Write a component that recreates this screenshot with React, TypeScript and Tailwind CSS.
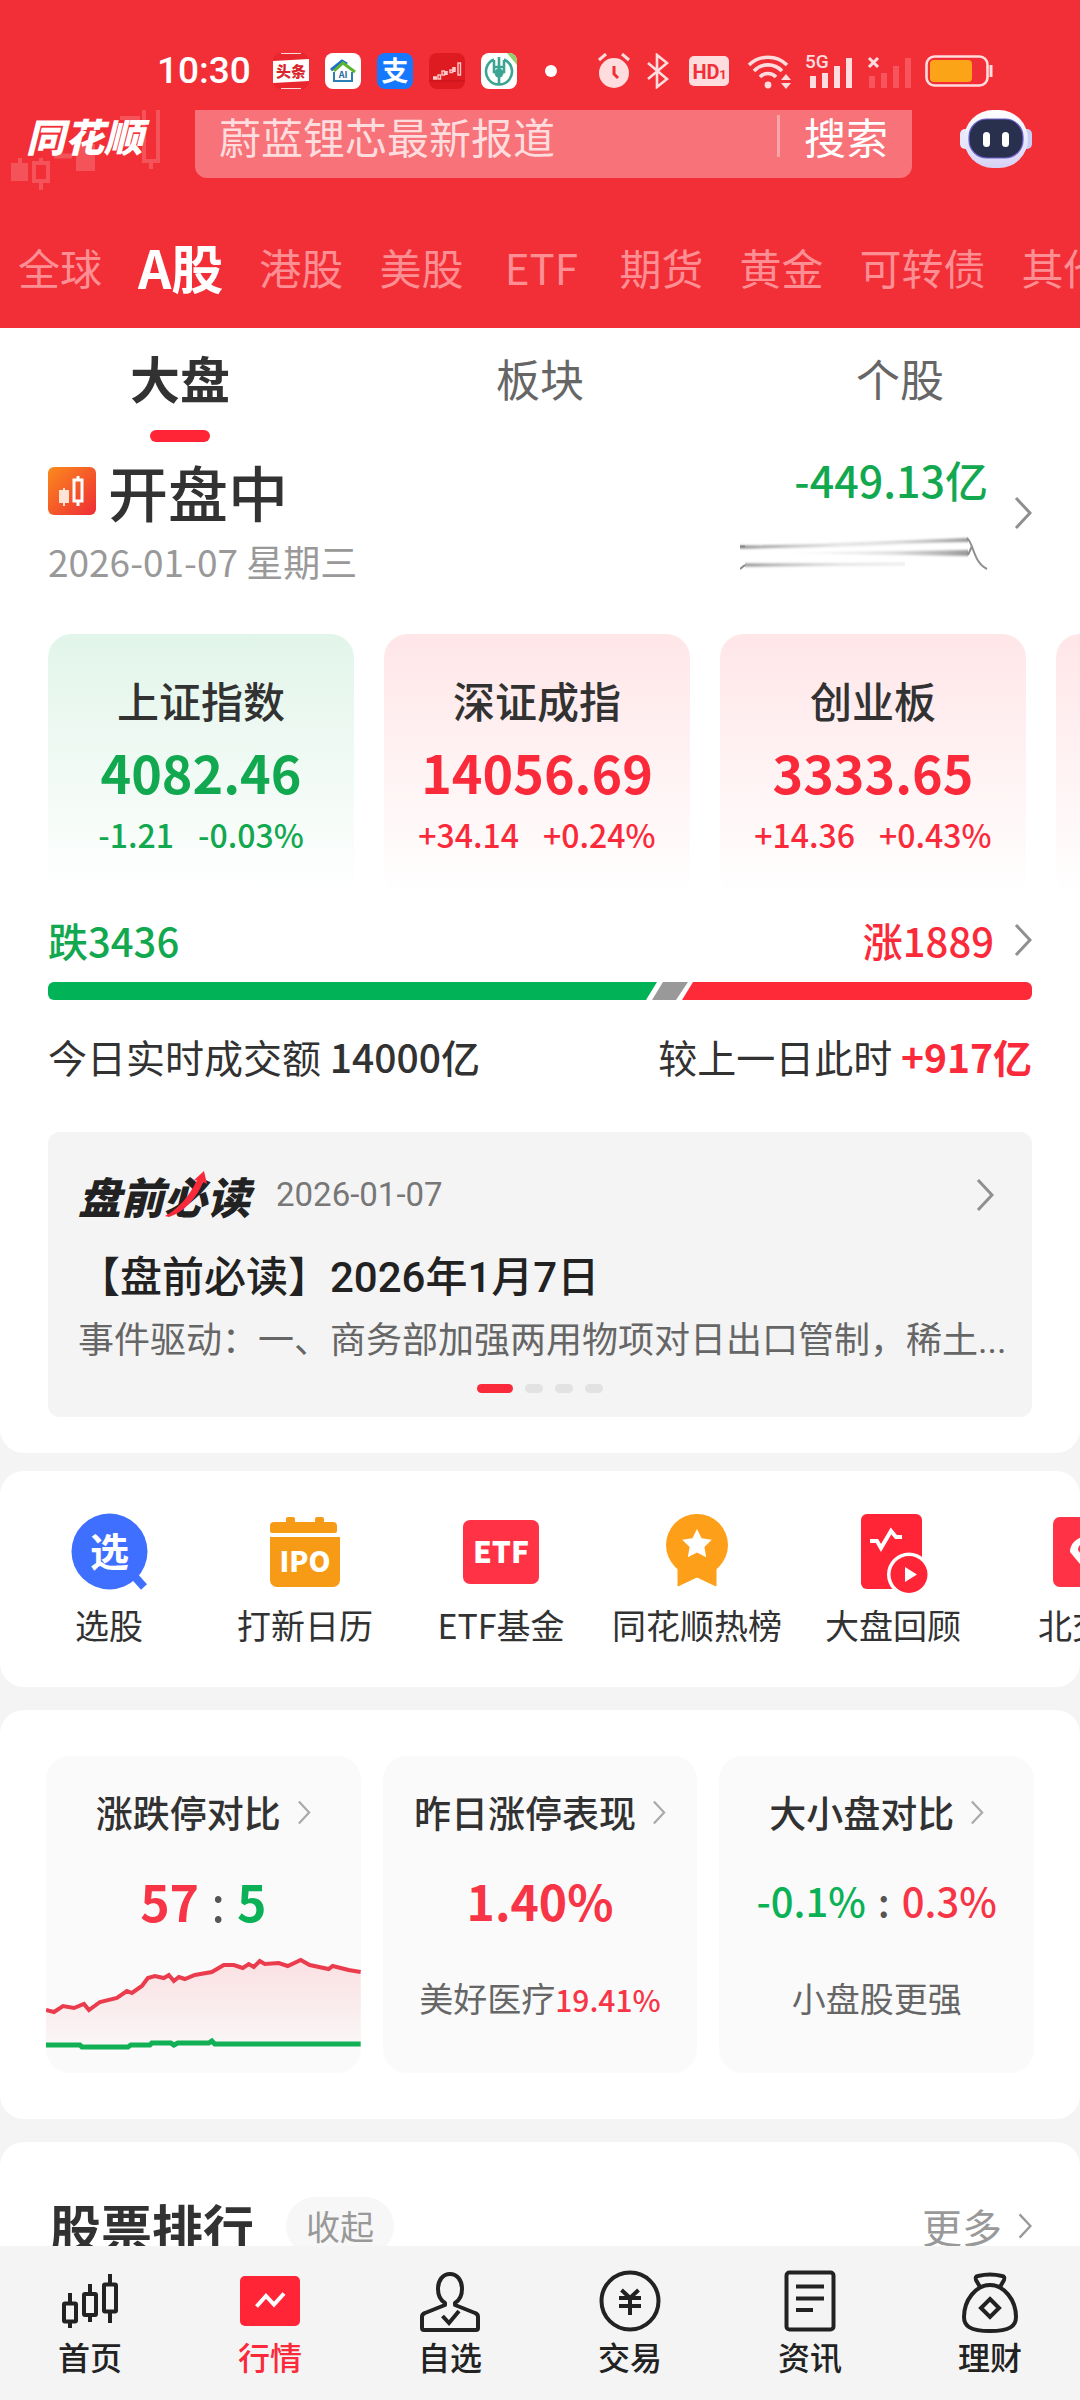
import type { ReactNode } from 'react';

const markets = ['全球', 'A股', '港股', '美股', 'ETF', '期货', '黄金', '可转债', '其他'];

const indices = [
  { name: '上证指数', value: '4082.46', diff: '-1.21', pct: '-0.03%', up: false },
  { name: '深证成指', value: '14056.69', diff: '+34.14', pct: '+0.24%', up: true },
  { name: '创业板', value: '3333.65', diff: '+14.36', pct: '+0.43%', up: true },
];

function Chevron({ className }: { className: string }) {
  return (
    <svg viewBox="0 0 18 34" fill="none" stroke="currentColor" strokeWidth="3" className={className} aria-hidden="true">
      <path d="M2 2l14 15L2 32" />
    </svg>
  );
}

function StatusBar() {
  return (
    <div className="flex h-[110px] items-center pt-8 pl-[157px] text-white">
      <span className="w-[116px] font-['Roboto'] text-[37px] leading-[44px] font-medium">10:30</span>
      <div className="flex items-center gap-4">
        <svg viewBox="0 0 36 36" className="size-9 overflow-visible">
          <rect width="36" height="36" rx="8" fill="#e8262d" />
          <path d="M8 .5h20M8 35.5h20" stroke="#ffd9d9" />
          <path d="M0 8l36-2v22L0 30z" fill="#fff" />
          <text x="18" y="24" textAnchor="middle" fontSize="15" fontWeight="900" fill="#d9252b">头条</text>
        </svg>
        <svg viewBox="0 0 36 36" className="size-9 overflow-visible">
          <rect width="36" height="36" rx="8" fill="#fff" />
          <path d="M9 19v9h18v-9" fill="none" stroke="#2b7fb5" strokeWidth="2" />
          <path d="M6 17L17 8l5 3" fill="none" stroke="#1f6fc4" strokeWidth="3" />
          <path d="M9 18l9-8 12 9" fill="none" stroke="#5cb531" strokeWidth="3" />
          <text x="18" y="25" textAnchor="middle" fontSize="9" fontWeight="700" fill="#246a9c">AI</text>
        </svg>
        <svg viewBox="0 0 36 36" className="size-9 overflow-visible">
          <rect width="36" height="36" rx="8" fill="#1677ff" />
          <text x="18" y="28" textAnchor="middle" fontSize="27" fontWeight="700" fill="#fff">支</text>
        </svg>
        <svg viewBox="0 0 36 36" className="size-9">
          <rect width="36" height="36" rx="8" fill="#df1b22" />
          <path d="M0 28h36" stroke="#c41219" />
          <g fill="none" stroke="#ffc9c9" strokeWidth="1.4">
            <path d="M4 25h4M17 22v-4M25 19v-5" strokeWidth="3.5" />
            <rect x="9" y="22" width="2.5" height="4" />
            <rect x="13" y="18" width="2.5" height="4" />
            <rect x="21" y="17" width="2.5" height="2.5" />
            <rect x="29" y="10" width="2.5" height="12" />
          </g>
        </svg>
        <svg viewBox="0 0 36 36" className="size-9">
          <rect width="36" height="36" rx="8" fill="#fff" />
          <path d="M26 0h2a8 8 0 018 8v4z" fill="#8fd06b" />
          <g fill="none" stroke="#3ba493" strokeWidth="2.6">
            <path d="M13 6.5a13 13 0 1010 0M18 4v28M13 7v12h10V7M13 14h10" />
          </g>
          <circle cx="18" cy="20" r="4.5" fill="#3ba493" />
        </svg>
      </div>
      <svg viewBox="0 0 12 12" className="ml-7 size-3"><circle cx="6" cy="6" r="6" fill="#fff" /></svg>
      <div className="ml-10 flex items-center text-[#ffdcdd]">
        <svg viewBox="0 0 34 36" className="h-9 w-[34px]">
          <circle cx="17" cy="20" r="15" fill="currentColor" />
          <path d="M2 7l7-6M25 1l7 6" stroke="currentColor" strokeWidth="3" />
          <path d="M17 13v8l4 4" fill="none" stroke="#f22f37" strokeWidth="3" />
        </svg>
        <svg viewBox="0 0 22 36" className="ml-4 h-9 w-[22px]" fill="none" stroke="currentColor" strokeWidth="2.6">
          <path d="M1 10l19 16-10 8V2l10 8L1 26" />
        </svg>
        <svg viewBox="0 0 40 30" className="ml-5 h-[30px] w-10 overflow-visible">
          <rect width="40" height="30" rx="5" fill="currentColor" />
          <text x="17" y="23" textAnchor="middle" fontFamily="Roboto" fontSize="20" fontWeight="700" fill="#f22f37">HD</text>
          <text x="34" y="23" textAnchor="middle" fontFamily="Roboto" fontSize="13" fontWeight="700" fill="#f22f37">1</text>
        </svg>
        <svg viewBox="0 0 46 36" className="ml-[18px] h-9 w-[46px]">
          <g fill="none" stroke="currentColor" strokeWidth="3.6">
            <path d="M2 12a27 27 0 0138 0M7 18a19 19 0 0128 0M13 24a11 11 0 0116 0" />
          </g>
          <circle cx="21" cy="32" r="3.4" fill="currentColor" />
          <path d="M34 27l5-6 5 6zM34 30l5 6 5-6z" fill="currentColor" />
        </svg>
        <svg viewBox="0 0 48 36" className="ml-3 h-9 w-12 overflow-visible">
          <text x="0" y="15" fontFamily="Roboto" fontSize="19" fontWeight="500" fill="currentColor">5G</text>
          <path d="M8 35V23M20 35V20M32 35V13M44 35V5" stroke="currentColor" strokeWidth="6" />
        </svg>
        <svg viewBox="0 0 44 36" className="ml-[14px] h-9 w-11">
          <path d="M2 5l9 9M11 5l-9 9" stroke="currentColor" strokeWidth="3" />
          <path d="M5 35V23M17 35V20M29 35V13M41 35V5" stroke="#f8545b" strokeWidth="6" />
        </svg>
        <svg viewBox="0 0 68 34" className="ml-[14px] h-[34px] w-[68px]">
          <rect x="1.5" y="2.5" width="61" height="29" rx="8" fill="none" stroke="currentColor" strokeWidth="2.6" />
          <rect x="5" y="6" width="42" height="22" rx="4" fill="#fba418" />
          <path d="M66 11v12" stroke="currentColor" strokeWidth="3" />
        </svg>
      </div>
    </div>
  );
}

function Robot() {
  return (
    <svg viewBox="0 0 72 58" className="h-[58px] w-[72px]">
      <defs>
        <linearGradient id="shell" x1="0" y1="0" x2="0" y2="1">
          <stop offset="0" stopColor="#fff" />
          <stop offset=".6" stopColor="#e3e4fb" />
          <stop offset="1" stopColor="#d8d2f6" />
        </linearGradient>
      </defs>
      <rect y="19" width="12" height="20" rx="5" fill="#e6e7fa" />
      <rect x="60" y="19" width="12" height="20" rx="5" fill="#c9cdf6" />
      <rect x="4" width="64" height="58" rx="29" fill="url(#shell)" />
      <rect x="9" y="9" width="54" height="39" rx="18" fill="#28304d" stroke="#6a5cc8" strokeWidth="1.2" />
      <rect x="23" y="22" width="7" height="15" rx="3.5" fill="#fff" />
      <rect x="42" y="22" width="7" height="15" rx="3.5" fill="#fff" />
    </svg>
  );
}

function Header() {
  return (
    <header className="bg-[#f22f37]">
      <StatusBar />
      <div className="flex h-[68px] items-stretch pr-12">
        <div className="relative w-[195px] shrink-0 pl-[26px]">
          <svg viewBox="0 0 160 84" className="absolute top-0 left-0 h-[84px] w-40" fill="none" stroke="#f5535a">
            <path d="M20 48v8" strokeWidth="4" />
            <rect x="11" y="53" width="17" height="18" fill="#f5535a" stroke="none" />
            <rect x="34" y="53" width="14" height="18" strokeWidth="4" />
            <path d="M41 48v5M41 71v9" strokeWidth="4" />
            <path d="M54 46h18" strokeWidth="5" />
            <rect x="76" y="34" width="19" height="27" fill="#f5535a" stroke="none" />
            <path d="M144 0v51h14V0M151 51v8M120 8h20" strokeWidth="4" />
          </svg>
          <h1 className="relative text-[39px] leading-[50px] font-black text-white italic">同花顺</h1>
        </div>
        <form className="flex min-w-0 flex-1 items-center rounded-b-xl bg-[#f77379] pr-6 pb-4 pl-6">
          <input
            aria-label="搜索"
            placeholder="蔚蓝锂芯最新报道"
            className="min-w-0 flex-1 bg-transparent text-[42px] leading-[52px] text-white outline-none placeholder:text-[#ffdcdd]"
          />
          <span className="h-[42px] w-[3px] bg-[#fba5a9]" />
          <button type="button" className="ml-6 text-[42px] leading-[52px] text-white">搜索</button>
        </form>
        <button type="button" aria-label="智能助手" className="ml-12 shrink-0 self-start">
          <Robot />
        </button>
      </div>
      <nav className="flex h-[150px] items-center gap-9 overflow-hidden pt-7 pl-[18px] whitespace-nowrap">
        {markets.map((m) =>
          m === 'A股' ? (
            <a key={m} href="#" className="shrink-0 text-[52px] leading-[60px] font-bold text-white">{m}</a>
          ) : (
            <a key={m} href="#" className="min-w-[84px] shrink-0 text-center text-[42px] leading-[60px] text-[#fd8f94]">{m}</a>
          )
        )}
      </nav>
    </header>
  );
}

function SubTabs() {
  return (
    <div className="grid grid-cols-3">
      <button type="button" className="flex flex-col items-center text-[50px] font-bold text-[#323232]">
        <span className="leading-[98px]">大盘</span>
        <span className="mt-1 h-3 w-[60px] rounded-full bg-[#ff2436]" />
      </button>
      <button type="button" className="self-start text-[44px] leading-[100px] text-[#666]">板块</button>
      <button type="button" className="self-start text-[44px] leading-[100px] text-[#666]">个股</button>
    </div>
  );
}

function FlowLine() {
  return (
    <svg viewBox="0 0 248 40" className="mt-7 h-10 w-[248px]" fill="none">
      <defs>
        <linearGradient id="fadeOut" gradientUnits="userSpaceOnUse" x1="0" y1="0" x2="228" y2="0">
          <stop offset="0" stopColor="#888" />
          <stop offset=".12" stopColor="#aaa" />
          <stop offset=".45" stopColor="#ccc" stopOpacity=".5" />
          <stop offset="1" stopColor="#ccc" stopOpacity=".2" />
        </linearGradient>
        <linearGradient id="fadeIn" gradientUnits="userSpaceOnUse" x1="40" y1="0" x2="228" y2="0">
          <stop offset="0" stopColor="#bbb" stopOpacity="0" />
          <stop offset=".6" stopColor="#bbb" stopOpacity=".5" />
          <stop offset="1" stopColor="#999" />
        </linearGradient>
        <filter id="smear" x="-5%" y="-100%" width="110%" height="300%">
          <feGaussianBlur stdDeviation="0 1.2" />
        </filter>
      </defs>
      <g filter="url(#smear)">
        <path d="M0 15q110-1 228-7" stroke="url(#fadeOut)" strokeWidth="3" />
        <path d="M5 33l160-1" stroke="url(#fadeOut)" strokeWidth="3" />
        <path d="M40 13L228 6v4z" fill="url(#fadeIn)" />
        <path d="M40 21l188-3v6z" fill="url(#fadeIn)" />
      </g>
      <path d="M0 14.500h5M0 37l5-4" stroke="#888" strokeWidth="2" />
      <path d="M227 6c7 6 6 24 20 31M232 14l-4 9" stroke="#8f8f8f" strokeWidth="2" />
    </svg>
  );
}

function Opening() {
  return (
    <div className="flex items-start justify-between px-12 pt-3">
      <div>
        <div className="flex items-center gap-3">
          <svg viewBox="0 0 48 48" className="size-12">
            <defs>
              <linearGradient id="openIcon" x1="0" y1="0" x2="1" y2="1">
                <stop offset="0" stopColor="#fb8a1c" />
                <stop offset="1" stopColor="#ee2c35" />
              </linearGradient>
            </defs>
            <rect width="48" height="48" rx="6" fill="url(#openIcon)" />
            <path d="M12 24h8v11h-8zM16 21v18" fill="#ffe3d4" stroke="#ffe3d4" strokeWidth="2" />
            <path d="M26 13h8v21h-8zM30 9v4M30 34v5" fill="none" stroke="#fff" strokeWidth="3" />
          </svg>
          <h2 className="text-[60px] leading-[74px] font-medium text-[#323232]">开盘中</h2>
        </div>
        <p className="mt-2.5 text-[37px] leading-[46px] text-[#999]">2026-01-07 星期三</p>
      </div>
      <div className="flex items-center gap-[26px]">
        <div className="flex flex-col items-end">
          <span className="text-[43px] leading-[50px] font-medium text-[#12a850]">-449.13亿</span>
          <FlowLine />
        </div>
        <Chevron className="h-[34px] w-[18px] text-[#8f8f8f]" />
      </div>
    </div>
  );
}

function IndexCards() {
  return (
    <div className="mt-[50px] flex gap-[30px] overflow-hidden pl-12">
      {indices.map((i) => (
        <article
          key={i.name}
          className={`flex w-[306px] shrink-0 flex-col items-center rounded-3xl bg-linear-to-b pt-[42px] pb-11 ${
            i.up ? 'from-[#ffe6e8] to-white text-[#fb2a3b]' : 'from-[#e2f5ea] to-white text-[#12a850]'
          }`}
        >
          <h3 className="text-[42px] leading-[48px] font-medium text-[#323232]">{i.name}</h3>
          <p className="mt-4 text-[52px] leading-[64px] font-bold">{i.value}</p>
          <p className="mt-2.5 flex gap-6 text-[32px] leading-[40px] font-medium">
            <span>{i.diff}</span>
            <span>{i.pct}</span>
          </p>
        </article>
      ))}
      <div className="w-[306px] shrink-0 rounded-3xl bg-linear-to-b from-[#ffe6e8] to-white" />
    </div>
  );
}

function Breadth() {
  return (
    <div className="px-12 pt-[18px]">
      <div className="flex items-center text-[40px] leading-[48px] font-medium">
        <span className="text-[#12a850]">跌3436</span>
        <span className="ml-auto text-[#fb2a3b]">涨1889</span>
        <Chevron className="ml-5 h-[34px] w-[18px] text-[#8f8f8f]" />
      </div>
      <svg viewBox="0 0 984 18" preserveAspectRatio="none" className="mt-[18px] h-[18px] w-full">
        <path d="M6 0h603l-11 18H6a6 6 0 01-6-6V6a6 6 0 016-6z" fill="#02b257" />
        <path d="M615 0h25l-12 18h-24z" fill="#999" />
        <path d="M645 0h333a6 6 0 016 6v6a6 6 0 01-6 6H634z" fill="#ff2a38" />
      </svg>
      <div className="mt-8 flex justify-between text-[39px] leading-[48px] text-[#323232]">
        <p>今日实时成交额 <span className="font-medium">14000亿</span></p>
        <p>较上一日此时 <span className="font-bold text-[#fb2a3b]">+917亿</span></p>
      </div>
    </div>
  );
}

function MorningRead() {
  return (
    <article className="mx-12 mt-13 rounded-xl bg-[#f4f4f4] px-[30px] pt-[38px] pb-6">
      <div className="flex items-center">
        <div className="relative text-[43px] leading-[50px] font-black text-[#222] italic">
          盘前必读
          <svg viewBox="0 0 44 48" className="absolute top-0 left-[86px] h-12 w-11">
            <path d="M1 46C14 39 25 27 33 10l-4 1L40 1l3 13-4-2C33 28 20 42 5 47z" fill="#fb2a3b" />
          </svg>
        </div>
        <time className="ml-[26px] font-['Roboto'] text-[33px] leading-[50px] text-[#777]">2026-01-07</time>
        <Chevron className="mr-2 ml-auto h-[34px] w-[18px] text-[#8f8f8f]" />
      </div>
      <h3 className="mt-[30px] font-['Roboto','Noto_Sans_CJK_SC',sans-serif] text-[42px] leading-[56px] font-medium text-[#222]">
        【盘前必读】2026年1月7日
      </h3>
      <p className="mt-2 text-[36px] leading-[46px] whitespace-nowrap text-[#666]">
        事件驱动：一、商务部加强两用物项对日出口管制，稀土<span className="font-['Roboto'] leading-none">...</span>
      </p>
      <div className="mt-6 flex justify-center gap-3">
        <span className="h-[9px] w-9 rounded-full bg-[#fb2a3b]" />
        <span className="h-[9px] w-[18px] rounded-full bg-[#e2e2e2]" />
        <span className="h-[9px] w-[18px] rounded-full bg-[#e2e2e2]" />
        <span className="h-[9px] w-[18px] rounded-full bg-[#e2e2e2]" />
      </div>
    </article>
  );
}

const shortcuts: { label: string; icon: ReactNode }[] = [
  {
    label: '选股',
    icon: (
      <>
        <circle cx="40.5" cy="40.5" r="38" fill="#3f6fff" />
        <path d="M66 66l9 10" stroke="#3f6fff" strokeWidth="8" />
        <text x="40.5" y="55" textAnchor="middle" fontSize="39" fontWeight="700" fill="#fff">选</text>
      </>
    ),
  },
  {
    label: '打新日历',
    icon: (
      <>
        <path d="M9 11h12V8a2 2 0 012-2h5a2 2 0 012 2v3h20V8a2 2 0 012-2h5a2 2 0 012 2v3h9a4 4 0 014 4v5a2 2 0 01-2 2H7a2 2 0 01-2-2v-5a4 4 0 014-4z" fill="#f79b16" />
        <path d="M5 26h70v43a7 7 0 01-7 7H12a7 7 0 01-7-7z" fill="#f79b16" />
        <text x="40" y="61" textAnchor="middle" fontSize="28" fontWeight="900" fill="#fff">IPO</text>
      </>
    ),
  },
  {
    label: 'ETF基金',
    icon: (
      <>
        <rect x="2" y="9" width="76" height="64" rx="7" fill="#ff3345" />
        <text x="40" y="52" textAnchor="middle" fontSize="30" fontWeight="900" fill="#fff">ETF</text>
      </>
    ),
  },
  {
    label: '同花顺热榜',
    icon: (
      <>
        <circle cx="40" cy="34" r="31" fill="#fe9f19" />
        <path d="M21 52h38v23l-19-9-19 9z" fill="#fe9f19" stroke="#fe9f19" strokeLinejoin="round" />
        <path d="M40 18l4.6 9.3 10.2 1.5-7.4 7.2 1.8 10.2L40 41.4l-9.2 4.8 1.8-10.2-7.4-7.2 10.2-1.5z" fill="#fff" />
      </>
    ),
  },
  {
    label: '大盘回顾',
    icon: (
      <>
        <rect x="8" y="3" width="61" height="75" rx="6" fill="#ff2436" />
        <path d="M17 30h7l4 7 10-17 5 6h6" fill="none" stroke="#fff" strokeWidth="4" />
        <circle cx="56" cy="63.5" r="22" fill="#fff" />
        <circle cx="56" cy="63.5" r="18.5" fill="#ff2436" />
        <path d="M52 56v15l12-7.5z" fill="#fff" />
      </>
    ),
  },
  {
    label: '北交所',
    icon: (
      <>
        <rect x="4" y="6" width="72" height="70" rx="7" fill="#ff3345" />
        <path d="M40 64L21 41c0-8 6-13 12-15h14c6 2 12 7 12 15z" fill="#fff" />
        <path d="M40 54L29 39c0-5 5-8 11-9z" fill="#ff3345" />
      </>
    ),
  },
];

function Shortcuts() {
  return (
    <section className="mt-[18px] flex overflow-hidden rounded-3xl bg-white pt-10 pb-10 pl-[11px]">
      {shortcuts.map((s) => (
        <a key={s.label} href="#" className="flex w-[196px] shrink-0 flex-col items-center text-[34px] leading-[44px] whitespace-nowrap text-[#323232]">
          <svg viewBox="0 0 80 80" className="mb-3 size-20 overflow-visible">{s.icon}</svg>
          {s.label}
        </a>
      ))}
    </section>
  );
}

const RED_LINE =
  '0,60 8,62 17,56 28,58 38,54 43,60 54,52 71,48 81,41 86,43 96,36 102,28 109,26 118,28 123,25 128,31 133,27 139,29 149,25 166,22 178,15 188,15 197,18 203,14 208,17 214,11 219,14 233,13 242,16 255,10 264,15 283,19 287,16 303,20 315,22';

function LimitChart() {
  return (
    <svg viewBox="0 0 315 123" preserveAspectRatio="none" className="mt-[18px] h-[123px] w-full" fill="none">
      <defs>
        <linearGradient id="limitFill" x1="0" y1="0" x2="0" y2="1">
          <stop offset="0" stopColor="#ff2436" stopOpacity=".12" />
          <stop offset="1" stopColor="#ff2436" stopOpacity=".02" />
        </linearGradient>
      </defs>
      <polygon points={`${RED_LINE} 315,94 0,94`} fill="url(#limitFill)" />
      <polyline points={RED_LINE} stroke="#ea3c4d" strokeWidth="4" />
      <polyline points="0,95 34,95 36,97 82,97 85,95 104,95 106,93 125,93 128,95 132,93 163,93 166,91 169,94 315,94" stroke="#12b055" strokeWidth="5" />
    </svg>
  );
}

function StatCard({ title, children }: { title: string; children: ReactNode }) {
  return (
    <article className="flex flex-col items-center overflow-hidden rounded-3xl bg-[#fafafa] pt-8">
      <h3 className="flex items-center gap-4 text-[37px] leading-[48px] font-medium whitespace-nowrap text-[#323232]">
        {title}
        <Chevron className="h-[25px] w-[14px] text-[#aaa]" />
      </h3>
      {children}
    </article>
  );
}

function Stats() {
  return (
    <section className="mt-[23px] rounded-3xl bg-white px-[46px] py-[46px]">
      <div className="grid grid-cols-3 gap-[22px]">
        <StatCard title="涨跌停对比">
          <p className="mt-8 flex gap-3 text-[50px] leading-[64px] font-bold">
            <span className="text-[#f73546]">57</span>
            <span className="font-normal text-[#555]">:</span>
            <span className="text-[#0bb156]">5</span>
          </p>
          <LimitChart />
        </StatCard>
        <StatCard title="昨日涨停表现">
          <p className="mt-8 text-[48px] leading-[64px] font-bold text-[#f73546]">1.40%</p>
          <p className="mt-11 text-[34px] leading-[44px] text-[#666]">
            美好医疗<span className="text-[30px] font-medium text-[#f73546]">19.41%</span>
          </p>
        </StatCard>
        <StatCard title="大小盘对比">
          <p className="mt-8 flex gap-3 text-[40px] leading-[64px] font-medium">
            <span className="text-[#0bb156]">-0.1%</span>
            <span className="text-[#555]">:</span>
            <span className="text-[#f73546]">0.3%</span>
          </p>
          <p className="mt-11 text-[34px] leading-[44px] text-[#666]">小盘股更强</p>
        </StatCard>
      </div>
    </section>
  );
}

function Ranking() {
  return (
    <section className="mt-[23px] flex items-center rounded-t-3xl bg-white px-12 pt-13 pb-10">
      <h2 className="pl-[2px] text-[51px] leading-[64px] font-bold text-[#323232]">股票排行</h2>
      <button type="button" className="ml-8 rounded-full bg-[#f7f7f7] px-5 text-[34px] leading-[58px] text-[#999]">收起</button>
      <a href="#" className="ml-auto flex items-center gap-4 text-[40px] leading-[58px] text-[#999]">
        更多
        <Chevron className="h-[30px] w-[14px]" />
      </a>
    </section>
  );
}

const navItems: { label: string; icon: ReactNode }[] = [
  {
    label: '首页',
    icon: (
      <>
        <rect x="4" y="33.5" width="12" height="18" rx="1" />
        <rect x="24" y="24" width="12" height="21" rx="1" />
        <rect x="44" y="14.5" width="12" height="27" rx="1" />
        <path d="M10 23v10M10 52v6M30 14v10M30 45v7M50 4v10M50 42v11" />
      </>
    ),
  },
  {
    label: '行情',
    icon: (
      <>
        <rect y="6" width="60" height="50" rx="5" fill="#ff2436" stroke="none" />
        <path d="M16.5 36.5L26 26l8 8.5 10-11" stroke="#fff" />
      </>
    ),
  },
  {
    label: '自选',
    icon: (
      <>
        <path d="M25 33c-5-3-7-7-7-14 0-9 5-15 12-15s12 6 12 15c0 7-2 11-7 14v2l20 8q3 1 3 4v11q0 2-2 2H4q-2 0-2-2V47q0-3 3-4l20-8z" strokeLinejoin="round" />
        <path d="M22.5 46l6.500 7 10-12" />
      </>
    ),
  },
  {
    label: '交易',
    icon: (
      <>
        <circle cx="30" cy="31" r="28.5" />
        <path d="M21.5 20l8.5 8 8.5-8M19 28h22M19 36h22M30 28v17" />
      </>
    ),
  },
  {
    label: '资讯',
    icon: (
      <>
        <rect x="6.5" y="2.5" width="47" height="57" rx="3" />
        <path d="M16 16.5h28M16 28.5h28M16 40h17" />
      </>
    ),
  },
  {
    label: '理财',
    icon: (
      <>
        <path d="M20 17l-4-7c-1-2 0-4 2-4q12-3 24 0c2 0 3 2 2 4l-4 7" strokeLinejoin="round" />
        <path d="M30 15c-14 0-26 15-26 32 0 9 6 14 26 14s26-5 26-14c0-17-12-32-26-32z" />
        <path d="M30 29l9 9-9 9-9-9z" />
      </>
    ),
  },
];

function BottomNav() {
  return (
    <nav className="grid shrink-0 grid-cols-6 bg-[#f4f4f4] pt-6 pb-[22px]">
      {navItems.map((n) => (
        <a
          key={n.label}
          href="#"
          className={`flex flex-col items-center text-[32px] leading-[44px] font-medium ${n.label === '行情' ? 'text-[#fb2a3b]' : 'text-[#222]'}`}
        >
          <svg viewBox="0 0 60 60" className="mb-1 size-[60px] overflow-visible" fill="none" stroke="currentColor" strokeWidth="4">
            {n.icon}
          </svg>
          {n.label}
        </a>
      ))}
    </nav>
  );
}

export default function App() {
  return (
    <div lang="zh-CN" className="flex h-screen flex-col bg-[#f4f4f4] font-['Noto_Sans_CJK_SC',sans-serif]">
      <main className="min-h-0 flex-1 overflow-hidden">
        <Header />
        <section className="rounded-b-3xl bg-white pb-9">
          <SubTabs />
          <Opening />
          <IndexCards />
          <Breadth />
          <MorningRead />
        </section>
        <Shortcuts />
        <Stats />
        <Ranking />
      </main>
      <BottomNav />
    </div>
  );
}
